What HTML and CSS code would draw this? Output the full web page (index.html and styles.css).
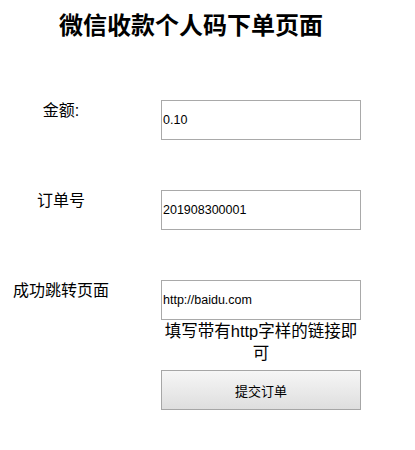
FILE: index.html
```html
<!DOCTYPE html>
<html lang="zh-CN">
<head>
<meta charset="utf-8">
<title>微信收款个人码下单页面</title>
<link rel="stylesheet" href="styles.css">
</head>
<body>
<div class="page">
  <h1 class="title">微信收款个人码下单页面</h1>
  <form class="form">
    <div class="row">
      <label class="label">金额:</label>
      <div class="field"><input class="input" type="text" value="0.10"></div>
    </div>
    <div class="row">
      <label class="label">订单号</label>
      <div class="field"><input class="input" type="text" value="201908300001"></div>
    </div>
    <div class="row row-last">
      <label class="label">成功跳转页面</label>
      <div class="field">
        <input class="input" type="text" value="http://baidu.com">
        <div class="hint">填写带有http字样的链接即可</div>
        <button class="submit" type="button">提交订单</button>
      </div>
    </div>
  </form>
</div>
</body>
</html>
```
FILE: styles.css
```css
html, body {
  margin: 0;
  padding: 0;
  background: #fff;
}
body {
  font-family: "Liberation Sans", "Noto Sans CJK SC", sans-serif;
  color: #000;
}
.page {
  width: 415px;
}
.title {
  margin: 0;
  padding-top: 11px;
  width: 382px;
  text-align: center;
  font-size: 24px;
  line-height: 30px;
  font-weight: bold;
}
.form {
  display: flex;
  flex-direction: column;
  gap: 50px;
  padding-top: 59px;
}
.row {
  display: flex;
}
.label {
  width: 122px;
  flex: none;
  text-align: center;
  font-size: 16px;
  line-height: 22px;
  margin-right: 39px;
}
.field {
  display: flex;
  flex-direction: column;
  width: 200px;
}
.input {
  box-sizing: border-box;
  width: 200px;
  height: 40px;
  margin: 0;
  padding: 0 1px;
  border: 1px solid #a9a9a9;
  font-family: "Liberation Sans", sans-serif;
  font-size: 12.5px;
  color: #000;
  background: #fff;
  outline: none;
}
.hint {
  text-align: center;
  font-size: 16.5px;
  line-height: 22px;
}
.submit {
  box-sizing: border-box;
  margin-top: 6px;
  width: 200px;
  height: 40px;
  border: 1px solid #a6a6a6;
  border-radius: 0;
  background: linear-gradient(#f6f6f6, #dedede);
  font-family: "Liberation Sans", "Noto Sans CJK SC", sans-serif;
  font-size: 13px;
  color: #000;
  padding: 0;
}
```
